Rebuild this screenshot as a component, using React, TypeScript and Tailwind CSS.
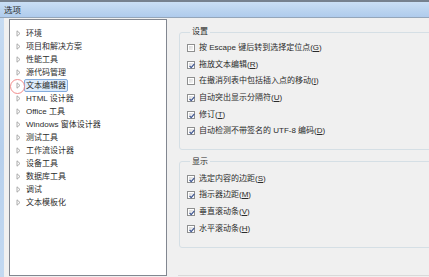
const treeItems = [
  '环境',
  '项目和解决方案',
  '性能工具',
  '源代码管理',
  '文本编辑器',
  'HTML 设计器',
  'Office 工具',
  'Windows 窗体设计器',
  '测试工具',
  '工作流设计器',
  '设备工具',
  '数据库工具',
  '调试',
  '文本模板化',
];

const settings = [
  { label: '按 Escape 键后转到选择定位点', key: 'G', checked: false },
  { label: '拖放文本编辑', key: 'R', checked: true },
  { label: '在撤消列表中包括插入点的移动', key: 'I', checked: false },
  { label: '自动突出显示分隔符', key: 'U', checked: true },
  { label: '修订', key: 'T', checked: true },
  { label: '自动检测不带签名的 UTF-8 编码', key: 'D', checked: true },
];

const display = [
  { label: '选定内容的边距', key: 'S', checked: true },
  { label: '指示器边距', key: 'M', checked: true },
  { label: '垂直滚动条', key: 'V', checked: true },
  { label: '水平滚动条', key: 'H', checked: true },
];

function Arrow() {
  return (
    <svg width="5" height="7" viewBox="0 0 5 7" className="shrink-0">
      <path d="M1 0.8 L4 3.5 L1 6.2 Z" fill="#fff" stroke="#a3a3a3" strokeWidth="0.9" />
    </svg>
  );
}

function CheckRow({ label, keyChar, checked }: { label: string; keyChar: string; checked: boolean }) {
  return (
    <div className="h-[16.6px] flex items-center gap-[4px]">
      <div className="w-[8px] h-[8px] border border-[#8e8f8f] bg-white p-[1px] shrink-0">
        <div className="w-full h-full bg-gradient-to-br from-[#d8d8d8] to-[#f6f6f6] relative">
          {checked && (
            <svg width="8" height="8" viewBox="0 0 8 8" className="absolute -left-[1px] -top-[1px]">
              <path d="M1.6 4 L3.2 5.7 L6.4 1.8" fill="none" stroke="#3d5592" strokeWidth="1.2" />
            </svg>
          )}
        </div>
      </div>
      <span className="whitespace-nowrap">
        {label}(<span className="underline underline-offset-1">{keyChar}</span>)
      </span>
    </div>
  );
}

export default function App() {
  return (
    <div className="w-[429px] h-[277px] overflow-hidden bg-[#f0f0f0] text-[#2b2b2b] text-[8px] leading-[10px] font-['Liberation_Sans','Noto_Sans_CJK_SC',sans-serif] flex flex-col">
      {/* title bar */}
      <div className="h-[18px] shrink-0 border-t-2 border-t-[#76818e] border-b border-b-[#94a6ba] bg-gradient-to-b from-[#cadff5] via-[#bcd5f0] to-[#afcbec] flex items-center pl-[4px] text-[8.5px]">
        选项
      </div>

      <div className="flex flex-1 min-h-0">
        <div className="w-[4px] bg-gradient-to-b from-[#c6dbf2] via-[#b6cfec] to-[#c3d9f1] shrink-0" />

        {/* tree */}
        <div className="relative ml-[5px] mt-[1px] w-[158px] h-[257px] bg-white border border-[#828790] pt-[7px] shrink-0">
          {treeItems.map((item, i) => (
            <div key={item} className="h-[13px] flex items-center pl-[6px] gap-[5px]">
              <Arrow />
              {i === 4 ? (
                <span className="h-[13px] flex items-center -ml-[2px] px-[1px] bg-[#dcebfc] border border-[#84acdd] rounded-[2px] whitespace-nowrap">
                  {item}
                </span>
              ) : (
                <span className="whitespace-nowrap">{item}</span>
              )}
            </div>
          ))}
          <div className="absolute left-[0px] top-[58.5px] w-[15px] h-[15px] rounded-full border border-[#f28c8c]" />
        </div>

        {/* options */}
        <div className="relative flex-1 pl-[12px]">
          <fieldset className="mt-[9px] w-[270px] border border-[#d5dfe5] rounded-[3px] pl-[7px] pt-[3px] pb-[9px]">
            <legend className="ml-[3px] px-[2px] leading-[10px]">设置</legend>
            {settings.map((s) => (
              <CheckRow key={s.key} label={s.label} keyChar={s.key} checked={s.checked} />
            ))}
          </fieldset>

          <fieldset className="mt-[7px] w-[270px] border border-[#d5dfe5] rounded-[3px] pl-[7px] pt-[4px] pb-[10px]">
            <legend className="ml-[3px] px-[2px] leading-[10px]">显示</legend>
            {display.map((s) => (
              <CheckRow key={s.key} label={s.label} keyChar={s.key} checked={s.checked} />
            ))}
          </fieldset>

          <div className="absolute left-[11px] right-0 top-[257px] border-t border-[#d9d9d9]" />
          <div className="absolute right-[-6px] top-[253px] w-[16px] h-[16px] rounded-[4px] border border-[#c4c4c4] bg-[#f4f4f4]" />
        </div>
      </div>
    </div>
  );
}
